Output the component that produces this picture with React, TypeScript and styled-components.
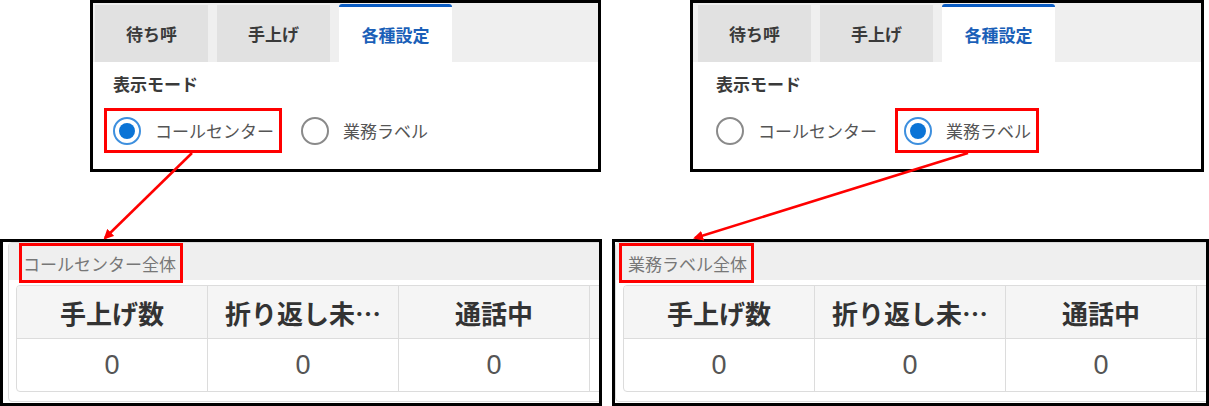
import React from "react";
import styled, { createGlobalStyle } from "styled-components";

const Global = createGlobalStyle`
  html, body { margin: 0; padding: 0; background: #fff; }
  body { font-family: "Noto Sans CJK JP", "Noto Sans", sans-serif; }
`;

const Page = styled.div`
  position: relative;
  display: flex;
  gap: 10px;
  width: 1209px;
  height: 406px;
  overflow: hidden;
  background: #fff;
`;

const Column = styled.div<{ $w: number }>`
  width: ${(p) => p.$w}px;
  display: flex;
  flex-direction: column;
  gap: 67px;
`;

const TopFrame = styled.div<{ $w: number; $ml: number }>`
  box-sizing: border-box;
  width: ${(p) => p.$w}px;
  height: 172px;
  margin-left: ${(p) => p.$ml}px;
  border: 3px solid #000;
  background: #fff;
  display: flex;
  flex-direction: column;
`;

const TabStrip = styled.div<{ $pl: number }>`
  height: 59px;
  background: #efefef;
  display: flex;
  align-items: flex-end;
  gap: 9px;
  padding-left: ${(p) => p.$pl}px;
`;

const Tab = styled.div<{ $active?: boolean }>`
  box-sizing: border-box;
  width: 113px;
  height: ${(p) => (p.$active ? 58 : 57)}px;
  background: ${(p) => (p.$active ? "#fff" : "#e1e1e1")};
  border-top: ${(p) => (p.$active ? "3px solid #0b5dc4" : "none")};
  border-radius: ${(p) => (p.$active ? "3px 3px 0 0" : "0")};
  display: flex;
  align-items: center;
  justify-content: center;
  padding-bottom: ${(p) => (p.$active ? 1 : 0)}px;
  font-size: 17px;
  font-weight: 700;
  color: ${(p) => (p.$active ? "#1a5fb8" : "#3a3a3a")};
`;

const Body = styled.div<{ $pl: number }>`
  display: flex;
  flex-direction: column;
  padding-top: 9px;
  padding-left: ${(p) => p.$pl}px;
`;

const SectionLabel = styled.div`
  margin-left: 20px;
  font-size: 17px;
  line-height: 25px;
  font-weight: 700;
  color: #3a3a3a;
`;

const RadioRow = styled.div`
  display: flex;
  gap: 10px;
  margin: 12px 0 0 11px;
`;

const Option = styled.label<{ $marked?: boolean }>`
  box-sizing: border-box;
  height: 45px;
  display: flex;
  align-items: center;
  gap: 14px;
  padding: 0 5px 0 6px;
  border: 3px solid ${(p) => (p.$marked ? "#f00" : "transparent")};
  font-size: 17px;
  color: #555;
  white-space: nowrap;
`;

const RadioCircle = styled.span<{ $checked?: boolean }>`
  box-sizing: border-box;
  width: 28px;
  height: 28px;
  border-radius: 50%;
  border: 2px solid ${(p) => (p.$checked ? "#3d8fde" : "#8a8a8a")};
  display: grid;
  place-items: center;
  background: #fff;
  &::after {
    content: "";
    width: 16px;
    height: 16px;
    border-radius: 50%;
    background: ${(p) => (p.$checked ? "#0b74d6" : "transparent")};
  }
`;

const BottomFrame = styled.div<{ $inset: number }>`
  box-sizing: border-box;
  height: 167px;
  border: 3px solid #000;
  background: #fff;
  overflow: hidden;
  padding-left: ${(p) => p.$inset}px;
`;

const Card = styled.div`
  box-sizing: border-box;
  width: 900px;
  height: 160px;
  border: 1px solid #dcdcdc;
  border-radius: 4px;
  background: #fff;
  display: flex;
  flex-direction: column;
`;

const CardHeader = styled.div<{ $pl: number }>`
  height: 37px;
  background: #efefef;
  display: flex;
  align-items: flex-start;
  padding-left: ${(p) => p.$pl}px;
`;

const CardTitle = styled.div<{ $pl: number }>`
  box-sizing: border-box;
  height: 40px;
  flex: none;
  display: flex;
  align-items: center;
  padding: 0 4px 0 ${(p) => p.$pl}px;
  border: 3px solid #f00;
  font-size: 17px;
  color: #777;
  white-space: nowrap;
`;

const Table = styled.div`
  margin: 5px 0 0 7px;
  display: grid;
  grid-template-columns: repeat(4, 191px);
  grid-template-rows: 53px 52px;
  border: 1px solid #dcdcdc;
  border-radius: 4px;
  width: max-content;
  overflow: hidden;
`;

const HeadCell = styled.div`
  box-sizing: border-box;
  background: #f5f5f5;
  border-right: 1px solid #dcdcdc;
  border-bottom: 1px solid #dcdcdc;
  display: flex;
  align-items: center;
  justify-content: center;
  font-size: 26px;
  font-weight: 700;
  color: #333;
  white-space: nowrap;
`;

const DataCell = styled.div`
  box-sizing: border-box;
  border-right: 1px solid #dcdcdc;
  display: flex;
  align-items: center;
  justify-content: center;
  font-family: "Liberation Sans", Arial, sans-serif;
  font-size: 27px;
  color: #555;
`;

const Overlay = styled.svg`
  position: absolute;
  left: 0;
  top: 0;
  pointer-events: none;
`;

const TABS = ["待ち呼", "手上げ", "各種設定"];
const OPTIONS = ["コールセンター", "業務ラベル"];
const HEADS = ["手上げ数", "折り返し未…", "通話中", ""];
const VALUES = ["0", "0", "0", ""];

function SettingsPanel({
  w,
  ml,
  selected,
  pad,
}: {
  w: number;
  ml: number;
  selected: number;
  pad: number;
}) {
  return (
    <TopFrame $w={w} $ml={ml}>
      <TabStrip $pl={2 + pad}>
        {TABS.map((t, i) => (
          <Tab key={t} $active={i === 2}>
            {t}
          </Tab>
        ))}
      </TabStrip>
      <Body $pl={pad}>
        <SectionLabel>表示モード</SectionLabel>
        <RadioRow>
          {OPTIONS.map((o, i) => (
            <Option key={o} $marked={i === selected}>
              <RadioCircle $checked={i === selected} />
              {o}
            </Option>
          ))}
        </RadioRow>
      </Body>
    </TopFrame>
  );
}

function SummaryPanel({
  title,
  inset,
  boxLeft,
  textPad,
}: {
  title: string;
  inset: number;
  boxLeft: number;
  textPad: number;
}) {
  return (
    <BottomFrame $inset={inset}>
      <Card>
        <CardHeader $pl={boxLeft}>
          <CardTitle $pl={textPad}>{title}</CardTitle>
        </CardHeader>
        <Table>
          {HEADS.map((h, i) => (
            <HeadCell key={"h" + i}>{h}</HeadCell>
          ))}
          {VALUES.map((v, i) => (
            <DataCell key={"d" + i}>{v}</DataCell>
          ))}
        </Table>
      </Card>
    </BottomFrame>
  );
}

export default function App() {
  return (
    <>
      <Global />
      <Page>
        <Column $w={602}>
          <SettingsPanel w={511} ml={90} selected={0} pad={0} />
          <SummaryPanel title="コールセンター全体" inset={5} boxLeft={10} textPad={1} />
        </Column>
        <Column $w={597}>
          <SettingsPanel w={514} ml={78} selected={1} pad={3} />
          <SummaryPanel title="業務ラベル全体" inset={0} boxLeft={3} textPad={6} />
        </Column>
        <Overlay width={1209} height={406} viewBox="0 0 1209 406">
          <defs>
            <marker
              id="ah"
              markerWidth="10"
              markerHeight="10"
              refX="8"
              refY="5"
              orient="auto"
              markerUnits="userSpaceOnUse"
            >
              <path d="M0,0 L10,5 L0,10 Z" fill="#f00" />
            </marker>
          </defs>
          <line x1="192" y1="153" x2="105" y2="238" stroke="#f00" strokeWidth="2.5" markerEnd="url(#ah)" />
          <line x1="968" y1="153" x2="695" y2="238" stroke="#f00" strokeWidth="2.5" markerEnd="url(#ah)" />
        </Overlay>
      </Page>
    </>
  );
}
